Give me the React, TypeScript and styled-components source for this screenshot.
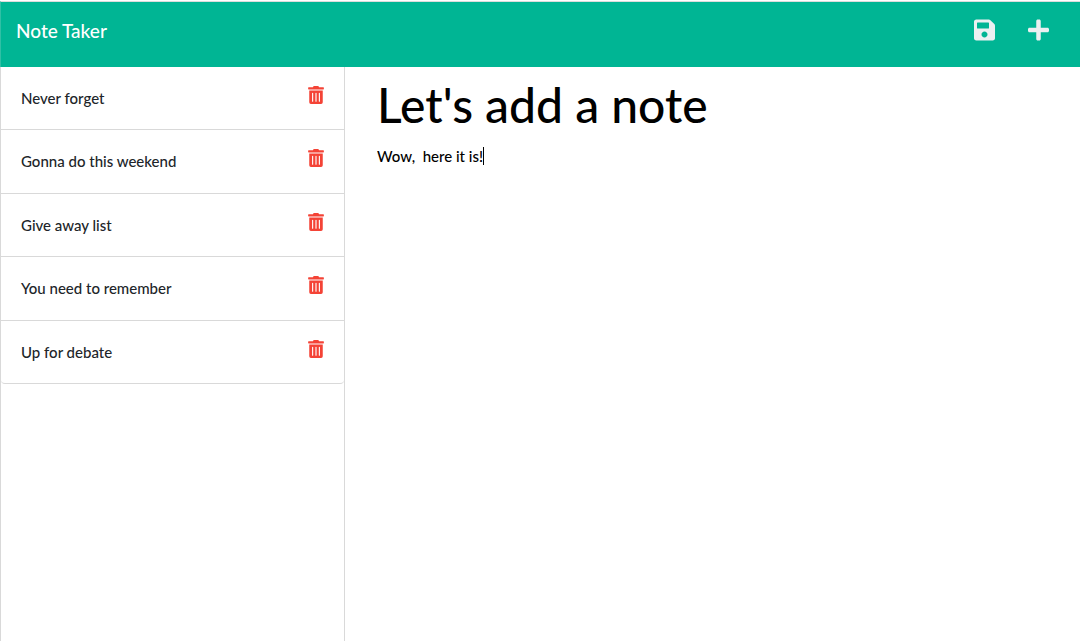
import React, { useState } from "react";
import styled, { createGlobalStyle } from "styled-components";
import { FaPlus, FaSave, FaTrashAlt } from "react-icons/fa";

const GlobalStyle = createGlobalStyle`
  *, *::before, *::after { box-sizing: border-box; }
  body {
    margin: 0;
    background: #fff;
    color: #212529;
    font-family: Lato, "Liberation Sans", sans-serif;
    font-size: 15px;
    font-weight: 500;
    line-height: 1.5;
  }
`;

const Page = styled.div`
  display: flex;
  flex-direction: column;
  min-height: 100vh;
  border-top: 1px solid #fff;
`;

const Header = styled.header`
  display: flex;
  justify-content: space-between;
  align-items: flex-start;
  padding: 15px 31px 21px 15px;
  background: #00b594;
  border-top: 1px solid #dcdcdc;
  border-left: 1px solid #30c0a5;
`;

const Brand = styled.a`
  color: #fff;
  font-size: 19px;
  line-height: 1.5;
  text-decoration: none;
`;

const Actions = styled.div`
  display: flex;
  gap: 33px;
  padding-top: 1px;
`;

const IconButton = styled.button<{ $color: string; $size: number }>`
  display: flex;
  padding: 0;
  border: 0;
  background: none;
  color: ${(p) => p.$color};
  font-size: ${(p) => p.$size}px;
  cursor: pointer;

  svg {
    width: auto;
    height: ${(p) => p.$size}px;
  }
`;

const HeaderButton = styled(IconButton)`
  width: 21px;
  justify-content: center;
`;

const Main = styled.div`
  display: flex;
  flex: 1;
`;

const Sidebar = styled.nav`
  width: calc(100% / 3 - 15px);
  flex: none;
  border: solid #d9d9d9;
  border-width: 0 1px;
`;

const NoteList = styled.ul`
  margin: 0;
  padding: 0;
  list-style: none;
`;

const NoteItem = styled.li`
  display: flex;
  justify-content: space-between;
  align-items: flex-start;
  padding: 19px 19px 20px 20px;
  border-bottom: 1px solid #d9d9d9;

  &:last-child {
    border-radius: 0 0 4px 4px;
  }
`;

const NoteTitle = styled.span`
  padding-top: 1px;
`;

const Editor = styled.main`
  display: flex;
  flex-direction: column;
  flex: 1;
  min-width: 0;
  padding: 2px 32px;
`;

const TitleInput = styled.input`
  width: 100%;
  height: 72px;
  padding: 0;
  border: 0;
  outline: 0;
  color: #000;
  font: 500 48px/72px Lato, "Liberation Sans", sans-serif;
`;

const Body = styled.div`
  display: flex;
  align-items: center;
  height: 30px;
`;

const BodyInput = styled.textarea`
  field-sizing: content;
  padding: 0;
  border: 0;
  outline: 0;
  resize: none;
  overflow: hidden;
  color: #000;
  font: 500 15px/22px Lato, "Liberation Sans", sans-serif;
`;

const Caret = styled.span`
  width: 1px;
  height: 18px;
  background: #000;
`;

const notes = [
  "Never forget",
  "Gonna do this weekend",
  "Give away list",
  "You need to remember",
  "Up for debate",
];

export default function App() {
  const [title, setTitle] = useState("Let's add a note");
  const [text, setText] = useState("Wow,  here it is!");

  return (
    <Page>
      <GlobalStyle />
      <Header>
        <Brand href="#">Note Taker</Brand>
        <Actions>
          <HeaderButton type="button" aria-label="Save note" $color="#ecf0f1" $size={24}>
            <FaSave />
          </HeaderButton>
          <HeaderButton type="button" aria-label="New note" $color="#ecf0f1" $size={24}>
            <FaPlus />
          </HeaderButton>
        </Actions>
      </Header>
      <Main>
        <Sidebar aria-label="Notes">
          <NoteList>
            {notes.map((note) => (
              <NoteItem key={note}>
                <NoteTitle>{note}</NoteTitle>
                <IconButton type="button" aria-label={`Delete ${note}`} $color="#f44336" $size={18}>
                  <FaTrashAlt />
                </IconButton>
              </NoteItem>
            ))}
          </NoteList>
        </Sidebar>
        <Editor>
          <TitleInput
            aria-label="Note title"
            value={title}
            onChange={(e) => setTitle(e.target.value)}
          />
          <Body>
            <BodyInput
              aria-label="Note text"
              rows={1}
              value={text}
              onChange={(e) => setText(e.target.value)}
            />
            <Caret />
          </Body>
        </Editor>
      </Main>
    </Page>
  );
}
